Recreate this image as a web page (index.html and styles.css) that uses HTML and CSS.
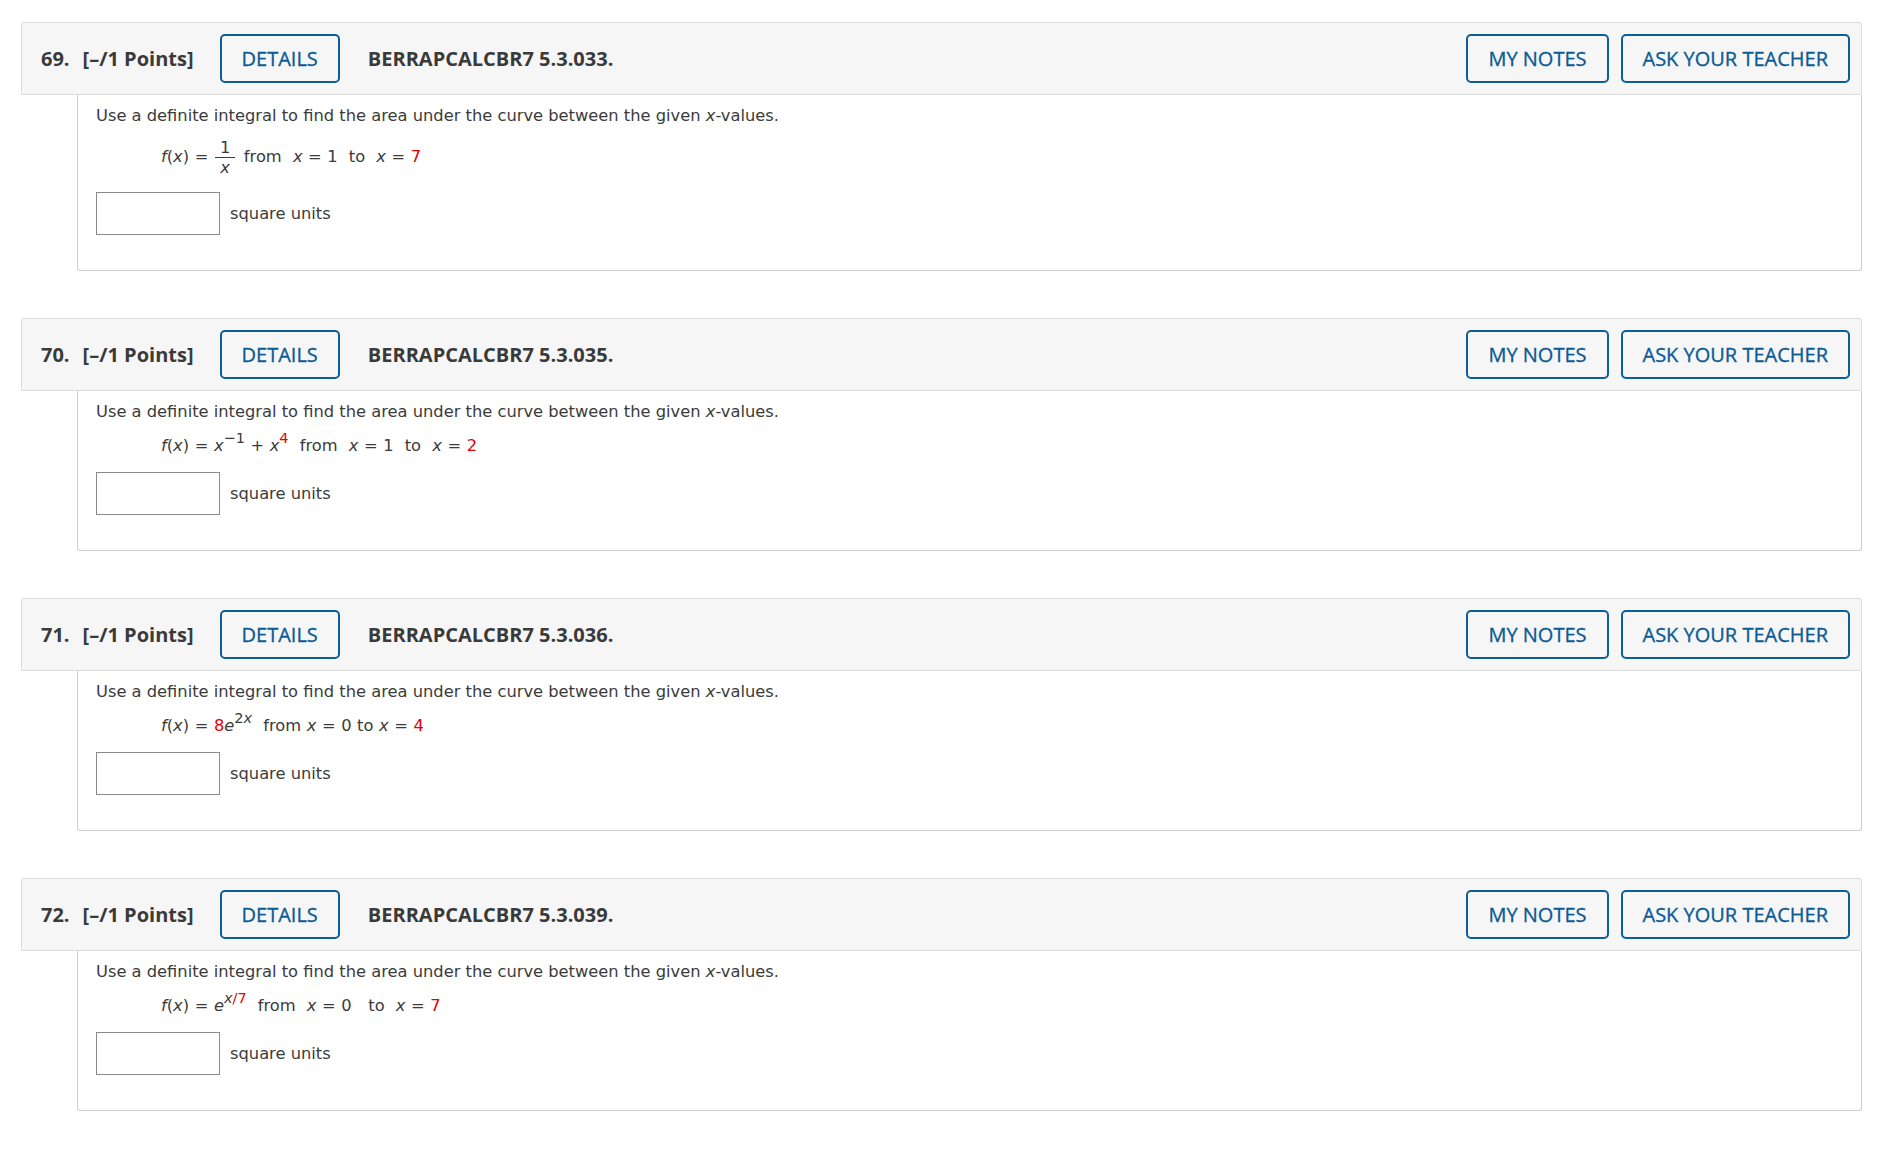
FILE: index.html
```html
<!DOCTYPE html>
<html lang="en">
<head>
    <meta charset="UTF-8">
    <meta name="viewport" content="width=device-width, initial-scale=1.0">
    <title>Assignment - Definite Integrals</title>
    <link rel="stylesheet" href="styles.css">
</head>
<body>
    <!-- Question 69 -->
    <div class="question">
        <div class="q-head">
            <span class="q-num">69.</span>
            <span class="q-points">[&ndash;/1 Points]</span>
            <button class="btn btn-details">DETAILS</button>
            <span class="q-code">BERRAPCALCBR7 5.3.033.</span>
            <div class="q-actions">
                <button class="btn">MY NOTES</button>
                <button class="btn">ASK YOUR TEACHER</button>
            </div>
        </div>
        <div class="q-body">
            <p class="q-text">Use a definite integral to find the area under the curve between the given <i>x</i>-values.</p>
            <div class="formula formula-frac">
                <i>f</i>(<i>x</i>) =
                <span class="frac"><span class="num">1</span><span class="den"><i>x</i></span></span>
                from&nbsp; <i>x</i> = 1&nbsp; to&nbsp; <i>x</i> = <span class="red">7</span>
            </div>
            <div class="answer">
                <input class="answer-box" type="text">
                <span class="units">square units</span>
            </div>
        </div>
    </div>

    <!-- Question 70 -->
    <div class="question">
        <div class="q-head">
            <span class="q-num">70.</span>
            <span class="q-points">[&ndash;/1 Points]</span>
            <button class="btn btn-details">DETAILS</button>
            <span class="q-code">BERRAPCALCBR7 5.3.035.</span>
            <div class="q-actions">
                <button class="btn">MY NOTES</button>
                <button class="btn">ASK YOUR TEACHER</button>
            </div>
        </div>
        <div class="q-body">
            <p class="q-text">Use a definite integral to find the area under the curve between the given <i>x</i>-values.</p>
            <div class="formula">
                <i>f</i>(<i>x</i>) = <i>x</i><sup>&minus;1</sup> + <i>x</i><sup class="red">4</sup>&nbsp; from&nbsp; <i>x</i> = 1&nbsp; to&nbsp; <i>x</i> = <span class="red">2</span>
            </div>
            <div class="answer">
                <input class="answer-box" type="text">
                <span class="units">square units</span>
            </div>
        </div>
    </div>

    <!-- Question 71 -->
    <div class="question">
        <div class="q-head">
            <span class="q-num">71.</span>
            <span class="q-points">[&ndash;/1 Points]</span>
            <button class="btn btn-details">DETAILS</button>
            <span class="q-code">BERRAPCALCBR7 5.3.036.</span>
            <div class="q-actions">
                <button class="btn">MY NOTES</button>
                <button class="btn">ASK YOUR TEACHER</button>
            </div>
        </div>
        <div class="q-body">
            <p class="q-text">Use a definite integral to find the area under the curve between the given <i>x</i>-values.</p>
            <div class="formula">
                <i>f</i>(<i>x</i>) = <span class="red">8</span><i>e</i><sup>2<i>x</i></sup>&nbsp; from <i>x</i> = 0 to <i>x</i> = <span class="red">4</span>
            </div>
            <div class="answer">
                <input class="answer-box" type="text">
                <span class="units">square units</span>
            </div>
        </div>
    </div>

    <!-- Question 72 -->
    <div class="question">
        <div class="q-head">
            <span class="q-num">72.</span>
            <span class="q-points">[&ndash;/1 Points]</span>
            <button class="btn btn-details">DETAILS</button>
            <span class="q-code">BERRAPCALCBR7 5.3.039.</span>
            <div class="q-actions">
                <button class="btn">MY NOTES</button>
                <button class="btn">ASK YOUR TEACHER</button>
            </div>
        </div>
        <div class="q-body">
            <p class="q-text">Use a definite integral to find the area under the curve between the given <i>x</i>-values.</p>
            <div class="formula">
                <i>f</i>(<i>x</i>) = <i>e</i><sup><i>x</i><span class="red">/7</span></sup>&nbsp; from&nbsp; <i>x</i> = 0&nbsp;&nbsp; to&nbsp; <i>x</i> = <span class="red">7</span>
            </div>
            <div class="answer">
                <input class="answer-box" type="text">
                <span class="units">square units</span>
            </div>
        </div>
    </div>
</body>
</html>
```

FILE: styles.css
```css
* {
    margin: 0;
    padding: 0;
    box-sizing: border-box;
}

body {
    font-family: "Open Sans", Arial, sans-serif;
    background-color: #fff;
    color: #3b3b3b;
    padding: 22px 21px;
}

/* Question block */
.question {
    margin-bottom: 47px;
}

.q-head {
    display: flex;
    align-items: center;
    height: 73px;
    padding: 0 11px 0 19px;
    background-color: #f6f6f6;
    border: 1px solid #dcdcdc;
    border-radius: 3px 3px 0 0;
    font-size: 20px;
}

.q-num,
.q-points,
.q-code {
    font-weight: 700;
    color: #3a3a3a;
}

.q-points {
    margin-left: 13px;
}

.btn-details {
    margin-left: 26px;
    margin-right: 28px;
}

.q-actions {
    margin-left: auto;
    display: flex;
    gap: 12px;
}

.btn {
    height: 49px;
    padding: 0 20px;
    background: transparent;
    border: 2px solid #0b5e98;
    border-radius: 5px;
    color: #0a5a93;
    font-family: "Open Sans", Arial, sans-serif;
    font-size: 20px;
    font-weight: 400;
    -webkit-text-stroke: 0.3px #0a5a93;
    cursor: pointer;
}

/* Question body */
.q-body {
    margin-left: 56px;
    padding: 10px 18px 35px;
    border: 1px solid #cfcfcf;
    border-top: none;
    border-radius: 0 0 3px 3px;
    font-family: "DejaVu Sans", Verdana, sans-serif;
    font-size: 16.3px;
    color: #3b3b3b;
}

.q-text {
    line-height: 22px;
}

.formula {
    margin-top: 12px;
    padding-left: 65px;
    line-height: 22px;
    word-spacing: 0.4px;
}

.formula sup {
    font-size: 14.5px;
    line-height: 0;
    vertical-align: 8px;
}

.formula-frac {
    margin-top: 11px;
}

.frac {
    display: inline-flex;
    flex-direction: column;
    align-items: center;
    vertical-align: middle;
    margin: 0 3px 0 1px;
    line-height: 19px;
}

.frac .num {
    padding: 0 5px;
    border-bottom: 1px solid #3b3b3b;
}

.red {
    color: #e60000;
}

.answer {
    display: flex;
    align-items: center;
    gap: 10px;
    margin-top: 15px;
}

.answer-box {
    width: 124px;
    height: 43px;
    border: 1px solid #8a8a8a;
    background: #fff;
}

.units {
    line-height: 22px;
}
```
